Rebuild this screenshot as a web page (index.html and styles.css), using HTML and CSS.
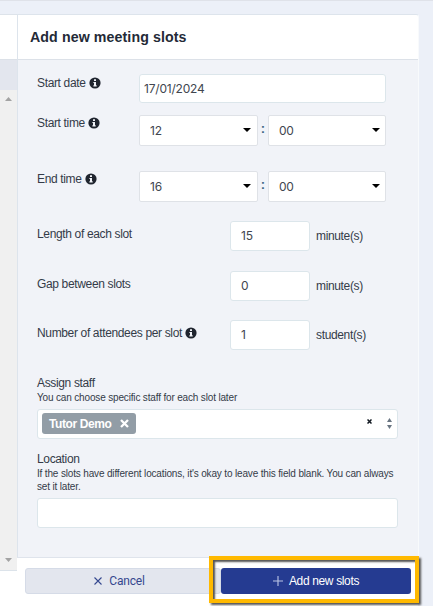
FILE: index.html
```html
<!DOCTYPE html>
<html lang="en">
<head>
<meta charset="utf-8">
<title>Add new meeting slots</title>
<link rel="stylesheet" href="styles.css">
</head>
<body>
<svg class="defs" aria-hidden="true">
  <symbol id="info" viewBox="0 0 12 12"><circle cx="6" cy="6" r="5.6" fill="#20252f"/><path d="M5 2.3h2v1.6H5zM4.4 4.9H7v3.3h.7v1.2H4.4V8.2H5V6h-.6z" fill="#f1f3f8"/></symbol>
  <symbol id="caret" viewBox="0 0 8 4"><path d="M0 0h8L4 4z" fill="#000"/></symbol>
</svg>
<div class="page">
  <div class="columns">
    <aside class="side">
      <div class="side-head"></div>
      <div class="side-row"></div>
      <div class="scroll">
        <svg width="7" height="4" viewBox="0 0 7 4"><path d="M0 4h7L3.5 0z" fill="#a3a3a3"/></svg>
        <svg width="7" height="4" viewBox="0 0 7 4"><path d="M0 0h7L3.5 4z" fill="#a3a3a3"/></svg>
      </div>
    </aside>
    <main class="panel">
      <h1 class="title">Add new meeting slots</h1>
      <form class="body">
        <div class="row date">
          <label class="label">Start date <svg class="info"><use href="#info"/></svg></label>
          <div class="field num">17/01/2024</div>
        </div>
        <div class="row time">
          <label class="label">Start time <svg class="info"><use href="#info"/></svg></label>
          <div class="select num">12<svg class="caret"><use href="#caret"/></svg></div>
          <span class="colon">:</span>
          <div class="select num">00<svg class="caret"><use href="#caret"/></svg></div>
        </div>
        <div class="row time">
          <label class="label">End time <svg class="info"><use href="#info"/></svg></label>
          <div class="select num">16<svg class="caret"><use href="#caret"/></svg></div>
          <span class="colon">:</span>
          <div class="select num">00<svg class="caret"><use href="#caret"/></svg></div>
        </div>
        <div class="row count">
          <label class="label">Length of each slot</label>
          <div class="field num">15</div><span class="unit">minute(s)</span>
        </div>
        <div class="row count">
          <label class="label">Gap between slots</label>
          <div class="field num">0</div><span class="unit">minute(s)</span>
        </div>
        <div class="row count">
          <label class="label">Number of attendees per slot <svg class="info"><use href="#info"/></svg></label>
          <div class="field num">1</div><span class="unit">student(s)</span>
        </div>
        <div class="group staff">
          <label class="label">Assign staff</label>
          <p class="hint">You can choose specific staff for each slot later</p>
          <div class="field picker">
            <span class="tag">Tutor Demo<svg width="9" height="9" viewBox="0 0 9 9"><path d="M1 1l7 7M8 1L1 8" stroke="#fff" stroke-width="2.3"/></svg></span>
            <svg class="clear" width="5" height="5" viewBox="0 0 5 5"><path d="M.5.5l4 4M4.500.5l-4 4" stroke="#111820" stroke-width="1.5"/></svg>
            <svg width="5" height="11" viewBox="0 0 5 11"><path d="M0 4h5L2.500 0zM0 7h5L2.500 11z" fill="#697582"/></svg>
          </div>
        </div>
        <div class="group location">
          <label class="label">Location</label>
          <p class="hint">If the slots have different locations, it's okay to leave this field blank. You can always set it later.</p>
          <div class="field"></div>
        </div>
      </form>
    </main>
  </div>
  <footer class="footer">
    <div class="button cancel"><svg width="8" height="8" viewBox="0 0 8 8"><path d="M.5.5l7 7M7.500.5l-7 7" stroke="#35488f" stroke-width="1.100"/></svg>Cancel</div>
    <div class="button add"><svg width="10" height="10" viewBox="0 0 10 10"><path d="M5 0v10M0 5h10" stroke="#bcc5e5" stroke-width="1.100"/></svg>Add new slots</div>
  </footer>
  <div class="highlight"></div>
</div>
</body>
</html>
```
FILE: styles.css
```css
* { box-sizing: border-box; }
body { margin: 0; font: 12px/16px "Liberation Sans", Arial, sans-serif; color: #343b48; background: #ecf0f8; }
svg { display: block; flex: none; }
.defs { position: absolute; width: 0; height: 0; }
.page { position: relative; height: 606px; padding-top: 14px; border-top: 1px solid #dfe2e9; overflow: hidden; display: flex; flex-direction: column; }
.columns { display: flex; height: 543px; margin-top: -1px; flex: none; }
.side { width: 17px; height: 557px; flex: none; border-top: 1px solid #dde3ea; border-bottom: 1px solid #dce3ea; display: flex; flex-direction: column; position: relative; z-index: 1; }
.side-head { height: 45px; background: #fff; border-bottom: 1px solid #dce1e8; }
.side-row { height: 30px; background: #e3e6ee; }
.scroll { flex: 1; background: #f0f0f0; display: flex; flex-direction: column; justify-content: space-between; padding: 7px 0 8px 5px; }
.panel { width: 402px; border: solid #dde4ec; border-width: 1px 1px 0 1px; border-right-color: #f8fafc; border-radius: 0 3px 0 0; background: #f1f3f8; overflow: hidden; }
.title { margin: 0; height: 45px; padding-left: 12px; background: #fff; border-bottom: 1px solid #dce1e8; font-size: 14.2px; line-height: 45px; font-weight: 700; color: #242a37; letter-spacing: .1px; }
.body { padding: 14px 19px 0; }
.row { display: flex; align-items: flex-start; }
.label { display: flex; align-items: center; gap: 3px; line-height: 16px; letter-spacing: -.35px; white-space: nowrap; }
.info { width: 12px; height: 12px; }
.num { font-family: Inter, sans-serif; font-size: 12px; letter-spacing: -.2px; color: #41464f; }
.field { height: 30px; border: 1px solid #dce6eb; border-radius: 3px; background: #fff; display: flex; align-items: center; }
.date { height: 41px; }
.date .label, .time .label { width: 102px; }
.date .label { padding-top: 1px; }
.date .field { width: 247px; height: 29px; padding-left: 4px; }
.time { height: 56px; }
.select { width: 119px; height: 31px; padding: 0 6px 0 10px; border: 1px solid #dfe2e7; border-radius: 2px; background: #fff; display: flex; align-items: center; justify-content: space-between; }
.caret { width: 8px; height: 4px; margin-top: -1px; }
.colon { width: 10px; padding-top: 6px; text-align: center; font-size: 13px; font-weight: 700; color: #426a86; }
.time .select:last-child { width: 118px; padding-right: 5px; }
.count { height: 49.5px; }
.time + .count { margin-top: -6px; }
.count .label { width: 193px; padding-top: 5px; }
.count .field { width: 80px; height: 30px; padding-left: 10px; }
.unit { margin-left: 6px; padding-top: 7px; letter-spacing: -.35px; }
.hint { margin: 0; font-size: 10px; line-height: 13px; letter-spacing: -.16px; }
.staff { padding-top: 5px; height: 81px; }
.group .field { width: 361px; margin-top: 5px; }
.picker { padding: 0 5px 0 4px; }
.tag { height: 21px; width: 94px; padding: 0 7px; border-radius: 3px; background: #929da6; color: #fff; font-weight: 700; letter-spacing: -.4px; display: flex; align-items: center; justify-content: space-between; }
.clear { margin: -5px 15px 0 auto; }
.footer { height: 49px; width: 418px; padding: 10px 7px 0 25px; border-top: 1px solid #dfe4ec; background: #fff; display: flex; flex: none; }
.button { height: 26px; border-radius: 3px; display: flex; align-items: center; justify-content: center; }
.cancel { width: 196px; padding-right: 7px; gap: 7px; border: 1px solid #d5dbe7; background: #e3e6ee; color: #35488f; font-family: Roboto, sans-serif; letter-spacing: -.2px; }
.add { width: 190px; gap: 6px; background: #253b91; color: #fff; letter-spacing: -.35px; }
.highlight { position: absolute; left: 209px; top: 555px; width: 210px; height: 47px; border: 4px solid #ffb900; box-shadow: 2px 2px 2px #555, inset 2px 2px 2px #555; }
```
